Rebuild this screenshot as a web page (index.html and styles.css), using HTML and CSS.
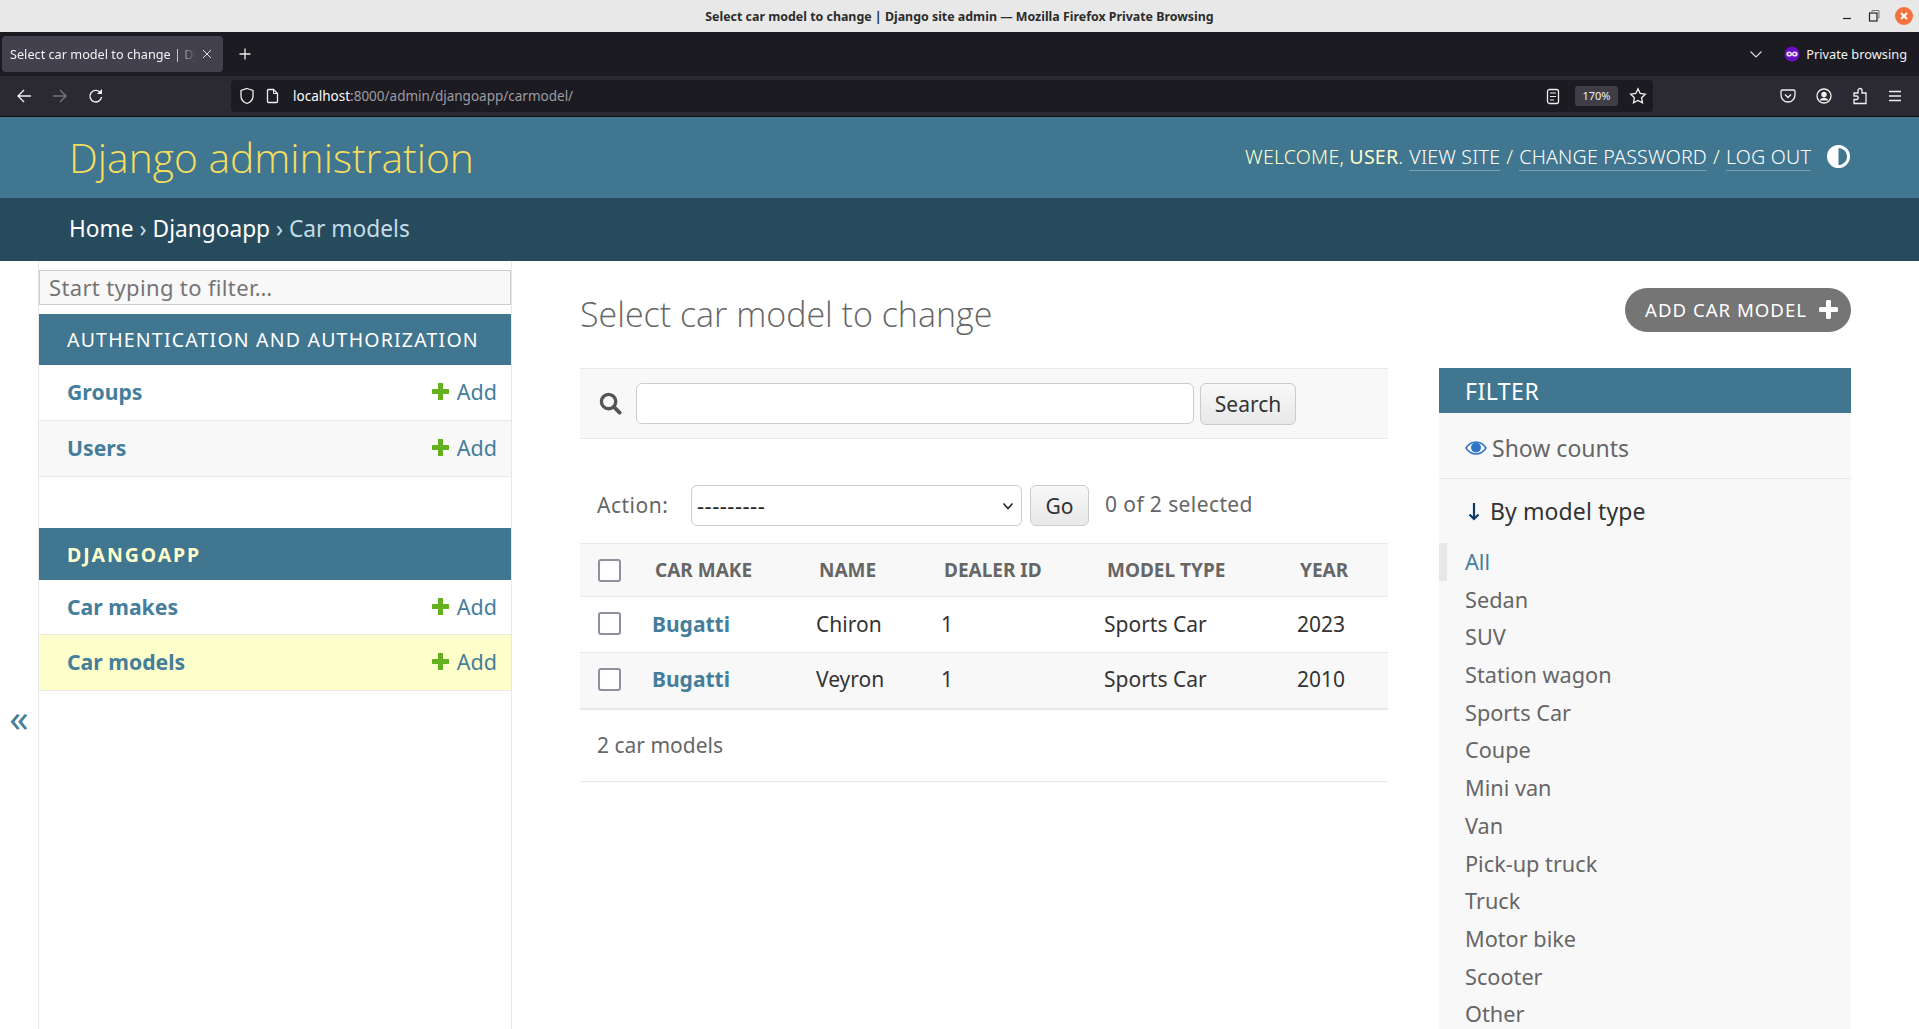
FILE: index.html
```html
<!DOCTYPE html>
<html lang="en">
<head>
    <meta charset="UTF-8">
    <title>Select car model to change | Django site admin</title>
    <link rel="stylesheet" href="styles.css">
</head>
<body>
    <div class="titlebar">
        <span class="window-title">Select car model to change | Django site admin — Mozilla Firefox Private Browsing</span>
        <div class="window-btns">
            <svg width="12" height="12" viewBox="0 0 12 12"><path d="M2 8.5h8" stroke="#222" stroke-width="1.2"/></svg>
            <svg width="14" height="14" viewBox="0 0 14 14" fill="none"><rect x="2.5" y="4" width="7.5" height="8" stroke="#222" stroke-width="1.2"/><path d="M5 3V1.5h7V9h-1.5" stroke="#777"/></svg>
            <span class="close-btn">
                <svg width="10" height="10" viewBox="0 0 10 10"><path d="M2 2l6 6M8 2l-6 6" stroke="#fff" stroke-width="2"/></svg>
            </span>
        </div>
    </div>

    <div class="tabbar">
        <div class="tab">
            <span class="tab-label">Select car model to change | Django site admin</span>
            <svg width="10" height="10" viewBox="0 0 10 10"><path d="M1 1l8 8M9 1l-8 8" stroke="#ddd" stroke-width="1"/></svg>
        </div>
        <svg class="new-tab" width="14" height="14" viewBox="0 0 14 14"><path d="M7 1.500v11M1.500 7h11" stroke="#eee" stroke-width="1.300"/></svg>
        <svg class="tab-list" width="14" height="14" viewBox="0 0 14 14" fill="none"><path d="M1.500 4.500L7 10l5.500-5.500" stroke="#ddd" stroke-width="1.200"/></svg>
        <svg class="mask" width="16" height="16" viewBox="0 0 16 16"><circle cx="8" cy="8" r="7.500" fill="#6a0dc4"/><ellipse cx="5.200" cy="8" rx="2.800" ry="2.600" fill="#e8e0f5"/><ellipse cx="10.800" cy="8" rx="2.800" ry="2.600" fill="#e8e0f5"/><circle cx="5.400" cy="8" r="1" fill="#4a0a90"/><circle cx="10.600" cy="8" r="1" fill="#4a0a90"/></svg>
        <span class="private-label">Private browsing</span>
    </div>

    <div class="navbar">
        <div class="nav-left">
            <svg width="16" height="16" viewBox="0 0 16 16" fill="none"><path d="M15 8H2M8 2L2 8l6 6" stroke="#f2f2f2" stroke-width="1.300"/></svg>
            <svg width="16" height="16" viewBox="0 0 16 16" fill="none"><path d="M1 8h13M8 2l6 6-6 6" stroke="#77767e" stroke-width="1.300"/></svg>
            <svg width="16" height="16" viewBox="0 0 16 16" fill="none"><path d="M13.500 9a5.800 5.800 0 1 1-1.700-5l1.700 1.500" stroke="#f2f2f2" stroke-width="1.400"/><path d="M14 1v5H9z" fill="#f2f2f2"/></svg>
        </div>
        <div class="urlbar">
            <svg width="16" height="18" viewBox="0 0 16 18" fill="none"><path d="M8 1.500l6 2v5.500c0 3.500-2.800 6.300-6 7.500-3.200-1.200-6-4-6-7.500V3.500z" stroke="#f0f0f0" stroke-width="1.300"/></svg>
            <svg width="13" height="16" viewBox="0 0 13 16" fill="none"><path d="M1.500 2.500a1 1 0 0 1 1-1h5l4 4v8a1 1 0 0 1-1 1h-8a1 1 0 0 1-1-1z" stroke="#f0f0f0" stroke-width="1.300"/><path d="M7.500 1.500v4h4" stroke="#f0f0f0"/></svg>
            <span class="url"><span class="url-host">localhost</span>:8000/admin/djangoapp/carmodel/</span>
            <svg class="reader" width="14" height="17" viewBox="0 0 14 17" fill="none"><rect x="1.500" y="1.500" width="11" height="14" rx="2" stroke="#eee" stroke-width="1.300"/><path d="M4 5h6M4 8.500h6M4 12h4" stroke="#eee" stroke-width="1.200"/></svg>
            <span class="zoom-level">170%</span>
            <svg width="18" height="18" viewBox="0 0 18 18" fill="none"><path d="M9 1.800l2.200 4.700 5.100.7-3.700 3.500.9 5.100L9 13.400l-4.500 2.400.9-5.100L1.700 7.200l5.100-.7z" stroke="#f0f0f0" stroke-width="1.300"/></svg>
        </div>
        <div class="nav-right">
            <svg width="16" height="16" viewBox="0 0 16 16" fill="none"><path d="M2.500 2h11a1.500 1.500 0 0 1 1.500 1.500V7a7 7 0 0 1-14 0V3.500A1.500 1.500 0 0 1 2.500 2z" stroke="#f0f0f0" stroke-width="1.300"/><path d="M5 6.500L8 9.500l3-3" stroke="#f0f0f0" stroke-width="1.300"/></svg>
            <svg width="16" height="16" viewBox="0 0 16 16" fill="none"><circle cx="8" cy="8" r="7" stroke="#f0f0f0" stroke-width="1.300"/><circle cx="8" cy="6.500" r="2.700" fill="#f0f0f0"/><path d="M3.500 12.500c1-2 2.500-2.800 4.500-2.800s3.500.8 4.500 2.800z" fill="#f0f0f0"/></svg>
            <svg width="16" height="18" viewBox="0 0 16 18" fill="none"><path d="M2 6h4V3.500a2 2 0 0 1 4 0V6h4v10.500H2V12.500h2.500a1.700 1.700 0 0 0 0-3.500H2z" stroke="#f0f0f0" stroke-width="1.300"/></svg>
            <svg width="14" height="12" viewBox="0 0 14 12"><path d="M1 1.500h12M1 6h12M1 10.500h12" stroke="#f0f0f0" stroke-width="1.300"/></svg>
        </div>
    </div>

    <header class="site-header">
        <a class="branding" href="#">Django administration</a>
        <div class="user-tools">
            <span>WELCOME, <strong>USER</strong>.</span>
            <a href="#">VIEW SITE</a> /
            <a href="#">CHANGE PASSWORD</a> /
            <a href="#">LOG OUT</a>
            <svg class="theme-toggle" width="23" height="23" viewBox="0 0 24 24"><circle cx="12" cy="12" r="10.500" fill="#417690" stroke="#fff" stroke-width="3"/><path d="M12 1.500a10.500 10.500 0 0 0 0 21z" fill="#fff"/></svg>
        </div>
    </header>

    <div class="breadcrumbs">
        <a href="#">Home</a> › <a href="#">Djangoapp</a> › Car models
    </div>

    <div class="main">
        <div class="toggle-col"><span class="toggle-nav">«</span></div>

        <nav class="sidebar">
            <input class="nav-filter" type="text" placeholder="Start typing to filter…">

            <div class="app-caption">AUTHENTICATION AND AUTHORIZATION</div>
            <div class="model-row">
                <a class="model-name" href="#">Groups</a>
                <a class="add-link" href="#"><svg class="plus" width="17" height="17" viewBox="0 0 17 17"><path d="M8.500 1v15M1 8.500h15" stroke="#63b11f" stroke-width="5" stroke-linecap="round"/></svg>Add</a>
            </div>
            <div class="model-row alt">
                <a class="model-name" href="#">Users</a>
                <a class="add-link" href="#"><svg class="plus" width="17" height="17" viewBox="0 0 17 17"><path d="M8.500 1v15M1 8.500h15" stroke="#63b11f" stroke-width="5" stroke-linecap="round"/></svg>Add</a>
            </div>

            <div class="app-caption current-app">DJANGOAPP</div>
            <div class="model-row short">
                <a class="model-name" href="#">Car makes</a>
                <a class="add-link" href="#"><svg class="plus" width="17" height="17" viewBox="0 0 17 17"><path d="M8.500 1v15M1 8.500h15" stroke="#63b11f" stroke-width="5" stroke-linecap="round"/></svg>Add</a>
            </div>
            <div class="model-row current-model">
                <a class="model-name" href="#">Car models</a>
                <a class="add-link" href="#"><svg class="plus" width="17" height="17" viewBox="0 0 17 17"><path d="M8.500 1v15M1 8.500h15" stroke="#63b11f" stroke-width="5" stroke-linecap="round"/></svg>Add</a>
            </div>
        </nav>

        <main class="content">
            <div class="content-top">
                <h1>Select car model to change</h1>
                <a class="addlink" href="#">ADD CAR MODEL <svg width="19" height="19" viewBox="0 0 19 19"><path d="M9.500 2v15M2 9.500h15" stroke="#fff" stroke-width="5" stroke-linecap="round"/></svg></a>
            </div>

            <div class="changelist">
                <div class="results">
                    <form class="search-bar">
                        <svg width="23" height="23" viewBox="0 0 24 24" fill="none"><circle cx="10" cy="10" r="7.500" stroke="#555" stroke-width="3.500"/><path d="M15.500 15.500l6 6" stroke="#555" stroke-width="4" stroke-linecap="round"/></svg>
                        <input class="search-input" type="text">
                        <button class="btn search-btn" type="button">Search</button>
                    </form>

                    <div class="actions">
                        <label class="action-label">Action:</label>
                        <span class="select-wrap">
                            <select class="action-select">
                                <option>---------</option>
                            </select>
                            <svg width="12" height="8" viewBox="0 0 12 8" fill="none"><path d="M1.500 1.500L6 6.500l4.500-5" stroke="#222" stroke-width="1.600"/></svg>
                        </span>
                        <button class="btn go-btn" type="button">Go</button>
                        <span class="action-counter">0 of 2 selected</span>
                    </div>

                    <table class="result-list">
                        <colgroup>
                            <col class="col-check"><col class="col-make"><col class="col-name"><col class="col-dealer"><col class="col-type"><col class="col-year">
                        </colgroup>
                        <thead>
                            <tr>
                                <th><input class="check" type="checkbox"></th>
                                <th>CAR MAKE</th>
                                <th>NAME</th>
                                <th>DEALER ID</th>
                                <th>MODEL TYPE</th>
                                <th>YEAR</th>
                            </tr>
                        </thead>
                        <tbody>
                            <tr>
                                <td><input class="check" type="checkbox"></td>
                                <td><a class="row-link" href="#">Bugatti</a></td>
                                <td>Chiron</td>
                                <td>1</td>
                                <td>Sports Car</td>
                                <td>2023</td>
                            </tr>
                            <tr class="alt">
                                <td><input class="check" type="checkbox"></td>
                                <td><a class="row-link" href="#">Bugatti</a></td>
                                <td>Veyron</td>
                                <td>1</td>
                                <td>Sports Car</td>
                                <td>2010</td>
                            </tr>
                        </tbody>
                    </table>

                    <p class="paginator">2 car models</p>
                </div>

                <aside class="filter">
                    <h2 class="filter-title">FILTER</h2>
                    <div class="show-counts">
                        <svg width="22" height="14" viewBox="0 0 22 14"><path d="M1 7c2.500-3.800 6-6 10-6s7.500 2.200 10 6c-2.500 3.800-6 6-10 6S3.500 10.800 1 7z" fill="none" stroke="#2e74c4" stroke-width="1.500"/><circle cx="11" cy="6.500" r="5" fill="#2e74c4"/></svg>
                        <a href="#">Show counts</a>
                    </div>
                    <h3 class="filter-by">
                        <svg width="12" height="19" viewBox="0 0 12 19" fill="none"><path d="M6 1v16M1.500 12.500L6 17l4.500-4.500" stroke="#0b3a66" stroke-width="2.200"/></svg>
                        By model type
                    </h3>
                    <ul class="filter-list">
                        <li class="selected"><a href="#">All</a></li>
                        <li><a href="#">Sedan</a></li>
                        <li><a href="#">SUV</a></li>
                        <li><a href="#">Station wagon</a></li>
                        <li><a href="#">Sports Car</a></li>
                        <li><a href="#">Coupe</a></li>
                        <li><a href="#">Mini van</a></li>
                        <li><a href="#">Van</a></li>
                        <li><a href="#">Pick-up truck</a></li>
                        <li><a href="#">Truck</a></li>
                        <li><a href="#">Motor bike</a></li>
                        <li><a href="#">Scooter</a></li>
                        <li><a href="#">Other</a></li>
                    </ul>
                </aside>
            </div>
        </main>
    </div>
</body>
</html>
```

FILE: styles.css
```css
html, body {
    margin: 0;
    height: 1029px;
    overflow: hidden;
}

body {
    font-family: "Noto Sans", sans-serif;
    font-size: 21px;
    color: #333;
    background: #fff;
}

a {
    text-decoration: none;
}

/* browser chrome */
.titlebar {
    position: relative;
    height: 32px;
    background: #e8e8e8;
    display: flex;
    align-items: center;
    justify-content: center;
    font-size: 12.4px;
    font-weight: bold;
    color: #2c2c2c;
}

.window-btns {
    position: absolute;
    right: 6px;
    top: 7px;
    display: flex;
    align-items: center;
    gap: 14px;
}

.close-btn {
    width: 18px;
    height: 18px;
    border-radius: 50%;
    background: #f4703c;
    display: flex;
    align-items: center;
    justify-content: center;
}

.tabbar {
    height: 44px;
    background: #1c1b22;
    display: flex;
    align-items: center;
    color: #f2f2f2;
    font-size: 12.8px;
}

.tab {
    width: 221px;
    height: 36px;
    margin-left: 2px;
    box-sizing: border-box;
    padding: 0 11px 0 8px;
    background: #42414d;
    border-radius: 4px;
    display: flex;
    align-items: center;
    gap: 6px;
    font-size: 12.7px;
}

.tab-label {
    flex: 1;
    white-space: nowrap;
    overflow: hidden;
    -webkit-mask-image: linear-gradient(to right, #000 88%, transparent);
    mask-image: linear-gradient(to right, #000 88%, transparent);
}

.new-tab {
    margin-left: 15px;
}

.tab-list {
    margin-left: auto;
}

.mask {
    margin-left: 21px;
    margin-right: 6px;
}

.private-label {
    margin-right: 12px;
}

.navbar {
    height: 40px;
    background: #2b2a33;
    border-bottom: 1px solid #0c0c0d;
    display: flex;
    align-items: center;
}

.nav-left {
    width: 231px;
    padding-left: 16px;
    box-sizing: border-box;
    display: flex;
    gap: 20px;
}

.urlbar {
    width: 1422px;
    height: 32px;
    box-sizing: border-box;
    padding: 0 6px 0 8px;
    background: #1c1b22;
    border-radius: 4px;
    display: flex;
    align-items: center;
    gap: 11px;
}

.url {
    font-size: 13.5px;
    color: #9d9ca3;
    margin-left: 3px;
}

.url-host {
    color: #fbfbfe;
}

.reader {
    margin-left: auto;
    margin-right: 4px;
}

.zoom-level {
    width: 43px;
    height: 20px;
    line-height: 20px;
    text-align: center;
    background: #3f3e46;
    border-radius: 3px;
    font-size: 11px;
    color: #f0f0f0;
}

.nav-right {
    flex: 1;
    padding-left: 127px;
    display: flex;
    align-items: center;
    gap: 20px;
}

/* django header */
.site-header {
    height: 81px;
    box-sizing: border-box;
    padding: 0 70px 0 69px;
    background: #417690;
    display: flex;
    align-items: center;
    justify-content: space-between;
}

.branding {
    color: #f5dd5d;
    font-family: "Open Sans", sans-serif;
    font-size: 40.8px;
    font-weight: 300;
    margin-top: -2px;
}

.user-tools {
    display: flex;
    align-items: center;
    gap: 6px;
    color: #ffc;
    font-size: 19.6px;
    letter-spacing: 0.2px;
    font-weight: 300;
    margin-right: -1px;
    padding-bottom: 2px;
}

.user-tools a {
    color: #fff;
    border-bottom: 1px solid rgba(255, 255, 255, 0.3);
}

.theme-toggle {
    margin-left: 10px;
}

.breadcrumbs {
    height: 63px;
    box-sizing: border-box;
    padding: 0 0 2px 69px;
    background: #264b5d;
    color: #c4dce8;
    display: flex;
    align-items: center;
    gap: 6px;
    font-size: 22.7px;
}

.breadcrumbs a {
    color: #fff;
}

.main {
    display: flex;
    height: 768px;
}

.toggle-col {
    width: 38px;
    padding-top: 437px;
    box-sizing: border-box;
    text-align: center;
}

.toggle-nav {
    color: #447e9b;
    font-size: 38px;
    line-height: 1;
}

/* sidebar */
.sidebar {
    width: 474px;
    box-sizing: border-box;
    border-left: 1px solid #e8e8e8;
    border-right: 1px solid #e8e8e8;
    padding-top: 9px;
}

.nav-filter {
    display: block;
    width: 100%;
    height: 35px;
    box-sizing: border-box;
    padding: 0 9px 2px;
    margin-bottom: 9px;
    font: inherit;
    font-size: 22px;
    letter-spacing: 0.35px;
    background: #f8f8f8;
    border: 1px solid #ccc;
}

.nav-filter::placeholder {
    color: #757575;
    opacity: 1;
}

.app-caption {
    height: 51px;
    line-height: 51px;
    padding-left: 28px;
    background: #417690;
    color: #fff;
    font-size: 19.5px;
    letter-spacing: 1.2px;
}

.current-app {
    height: 52px;
    line-height: 54px;
    margin-top: 51px;
    color: #ffc;
    font-weight: bold;
    letter-spacing: 1.9px;
}

.model-row {
    height: 56px;
    box-sizing: border-box;
    padding: 0 14px 2px 28px;
    border-bottom: 1px solid #e8e8e8;
    display: flex;
    align-items: center;
    justify-content: space-between;
}

.model-row.short {
    height: 55px;
}

.model-row.alt {
    background: #f8f8f8;
}

.model-row.current-model {
    background: #ffc;
}

.model-name {
    color: #447e9b;
    font-weight: bold;
    font-size: 21.2px;
}

.add-link {
    color: #447e9b;
    font-size: 21.5px;
    display: flex;
    align-items: center;
    gap: 8px;
}

/* content */
.content {
    flex: 1;
    padding: 27px 68px 0;
    min-width: 0;
}

.content-top {
    display: flex;
    align-items: center;
    justify-content: space-between;
    height: 44px;
    margin-bottom: 36px;
}

h1 {
    margin: 0;
    font-family: "Open Sans", sans-serif;
    font-size: 34px;
    font-weight: 300;
    color: #666;
    padding-top: 8px;
}

.addlink {
    height: 44px;
    box-sizing: border-box;
    padding: 0 13px 2px 20px;
    border-radius: 22px;
    background: #757575;
    color: #fff;
    font-size: 18.6px;
    letter-spacing: 1px;
    display: flex;
    align-items: center;
    gap: 12px;
}

.changelist {
    display: flex;
    gap: 51px;
}

.results {
    width: 808px;
}

.search-bar {
    height: 71px;
    box-sizing: border-box;
    padding-left: 19px;
    background: #f8f8f8;
    border-top: 1px solid #e8e8e8;
    border-bottom: 1px solid #e8e8e8;
    display: flex;
    align-items: center;
    gap: 14px;
}

.search-input {
    width: 558px;
    height: 41px;
    box-sizing: border-box;
    border: 1px solid #ccc;
    border-radius: 6px;
    background: #fff;
    margin-right: -8px;
}

.btn {
    font: inherit;
    font-size: 21px;
    color: #333;
    border: 1px solid #ccc;
    border-radius: 6px;
    background: linear-gradient(#f8f8f8, #e8e8e8);
    height: 42px;
    padding: 0;
}

.search-btn {
    width: 96px;
}

.actions {
    height: 41px;
    margin-top: 46px;
    margin-bottom: 17px;
    padding-left: 17px;
    display: flex;
    align-items: center;
    color: #666;
}

.action-label {
    width: 94px;
    padding-bottom: 2px;
    letter-spacing: 0.5px;
}

.select-wrap {
    position: relative;
    display: block;
}

.select-wrap svg {
    position: absolute;
    right: 8px;
    top: 17px;
}

.action-select {
    appearance: none;
    -webkit-appearance: none;
    display: block;
    width: 331px;
    height: 41px;
    box-sizing: border-box;
    padding: 0 5px 2px;
    font: inherit;
    font-size: 22px;
    letter-spacing: 0.5px;
    color: #222;
    background: #fff;
    border: 1px solid #ccc;
    border-radius: 6px;
}

.go-btn {
    width: 59px;
    margin-left: 8px;
    height: 41px;
}

.action-counter {
    margin-left: 16px;
    padding-bottom: 4px;
    letter-spacing: 0.4px;
}

.result-list {
    width: 100%;
    table-layout: fixed;
    border-collapse: collapse;
}

.col-check { width: 62px; }
.col-make { width: 164px; }
.col-name { width: 125px; }
.col-dealer { width: 163px; }
.col-type { width: 193px; }

.result-list th {
    height: 52px;
    padding: 0 0 0 13px;
    text-align: left;
    font-size: 19px;
    color: #666;
    background: #f8f8f8;
    border-top: 1px solid #e8e8e8;
    border-bottom: 1px solid #e8e8e8;
}

.result-list td {
    height: 56px;
    padding: 0 0 2px 10px;
    box-sizing: border-box;
    border-bottom: 1px solid #e8e8e8;
}

.result-list th:first-child,
.result-list td:first-child {
    padding-left: 18px;
}

.result-list tr.alt td {
    background: #f8f8f8;
    border-bottom-width: 2px;
}

.check {
    appearance: none;
    -webkit-appearance: none;
    display: block;
    width: 23px;
    height: 23px;
    margin: 0;
    box-sizing: border-box;
    background: #fff;
    border: 2px solid #8f8f9d;
    border-radius: 3px;
}

.row-link {
    color: #447e9b;
    font-weight: bold;
}

.paginator {
    height: 72px;
    margin: 0;
    padding: 0 0 0 17px;
    box-sizing: border-box;
    border-bottom: 1px solid #e8e8e8;
    color: #666;
    display: flex;
    align-items: center;
}

/* filter panel */
.filter {
    width: 412px;
    height: 700px;
    background: #f8f8f8;
}

.filter-title {
    margin: 0;
    height: 45px;
    line-height: 47px;
    padding-left: 26px;
    background: #417690;
    color: #fff;
    font-size: 23px;
    font-weight: normal;
    letter-spacing: 0.5px;
}

.show-counts {
    height: 66px;
    box-sizing: border-box;
    padding: 4px 0 0 26px;
    border-bottom: 1px solid #e8e8e8;
    display: flex;
    align-items: center;
    gap: 5px;
    font-size: 23px;
}

.show-counts a {
    color: #666;
}

.filter-by {
    margin: 0;
    height: 64px;
    box-sizing: border-box;
    padding: 0 0 0 29px;
    font-size: 23px;
    font-weight: normal;
    color: #333;
    display: flex;
    align-items: center;
    gap: 10px;
    letter-spacing: 0.1px;
}

.filter-list {
    list-style: none;
    margin: 0;
    padding: 0;
}

.filter-list li {
    height: 37.7px;
    line-height: 37.7px;
    padding-left: 26px;
    font-size: 21.7px;
}

.filter-list a {
    color: #666;
}

.filter-list .selected {
    border-left: 8px solid #e8e8e8;
    padding-left: 18px;
}

.filter-list .selected a {
    color: #447e9b;
}
```
